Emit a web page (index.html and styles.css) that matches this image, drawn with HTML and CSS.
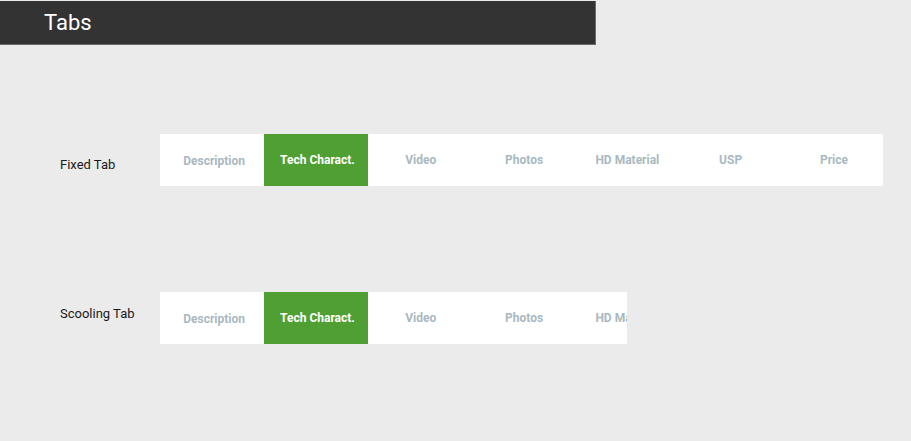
FILE: index.html
```html
<!DOCTYPE html>
<html>
<head>
<meta charset="utf-8">
<link rel="stylesheet" href="styles.css">
</head>
<body>
<header class="topbar"><h1 class="title">Tabs</h1></header>
<main class="content">
  <section class="row row-fixed">
    <div class="label">Fixed Tab</div>
    <nav class="tabs tabs-fixed">
      <div class="tab">Description</div>
      <div class="tab active">Tech Charact.</div>
      <div class="tab">Video</div>
      <div class="tab">Photos</div>
      <div class="tab">HD Material</div>
      <div class="tab">USP</div>
      <div class="tab">Price</div>
    </nav>
  </section>
  <section class="row row-scroll">
    <div class="label">Scooling Tab</div>
    <nav class="tabs tabs-scroll">
      <div class="tab">Description</div>
      <div class="tab active">Tech Charact.</div>
      <div class="tab">Video</div>
      <div class="tab">Photos</div>
      <div class="tab">HD Material</div>
    </nav>
  </section>
</main>
</body>
</html>
```
FILE: styles.css
```css
html, body {
  margin: 0;
  padding: 0;
  background: #ebebeb;
  font-family: Roboto, "Liberation Sans", sans-serif;
}
body {
  padding-top: 1px;
  width: 909px;
  height: 440px;
}
.topbar {
  width: 595px;
  height: 43px;
  background: #333333;
  border-right: 1px solid #6a6a6a;
  border-bottom: 1px solid #6a6a6a;
  display: flex;
  align-items: center;
}
.title {
  margin: 0 0 0 44px;
  color: #ffffff;
  font-size: 22px;
  font-weight: 400;
  line-height: 1;
  padding-top: 1px;
}
.content {
  padding-top: 89px;
  display: flex;
  flex-direction: column;
  gap: 106px;
}
.row {
  display: flex;
  align-items: flex-start;
  padding-left: 60px;
}
.label {
  width: 100px;
  font-size: 13px;
  color: #1a1a1a;
  line-height: 16px;
}
.row-fixed .label { margin-top: 23px; }
.row-scroll .label { margin-top: 14px; }
.tabs {
  display: flex;
  background: #ffffff;
  height: 52px;
  overflow: hidden;
  box-sizing: border-box;
  padding-left: 1px;
}
.tabs-fixed { width: 723px; }
.tabs-scroll { width: 467px; }
.tab {
  box-sizing: border-box;
  width: 103.3px;
  flex: 0 0 103.3px;
  display: flex;
  align-items: center;
  justify-content: center;
  padding-left: 3px;
  font-size: 12px;
  font-weight: 700;
  color: #a9b9c1;
  white-space: nowrap;
}
.tab:first-child { padding-top: 2px; }
.tab.active {
  background: #4f9f32;
  color: #ffffff;
}
```
